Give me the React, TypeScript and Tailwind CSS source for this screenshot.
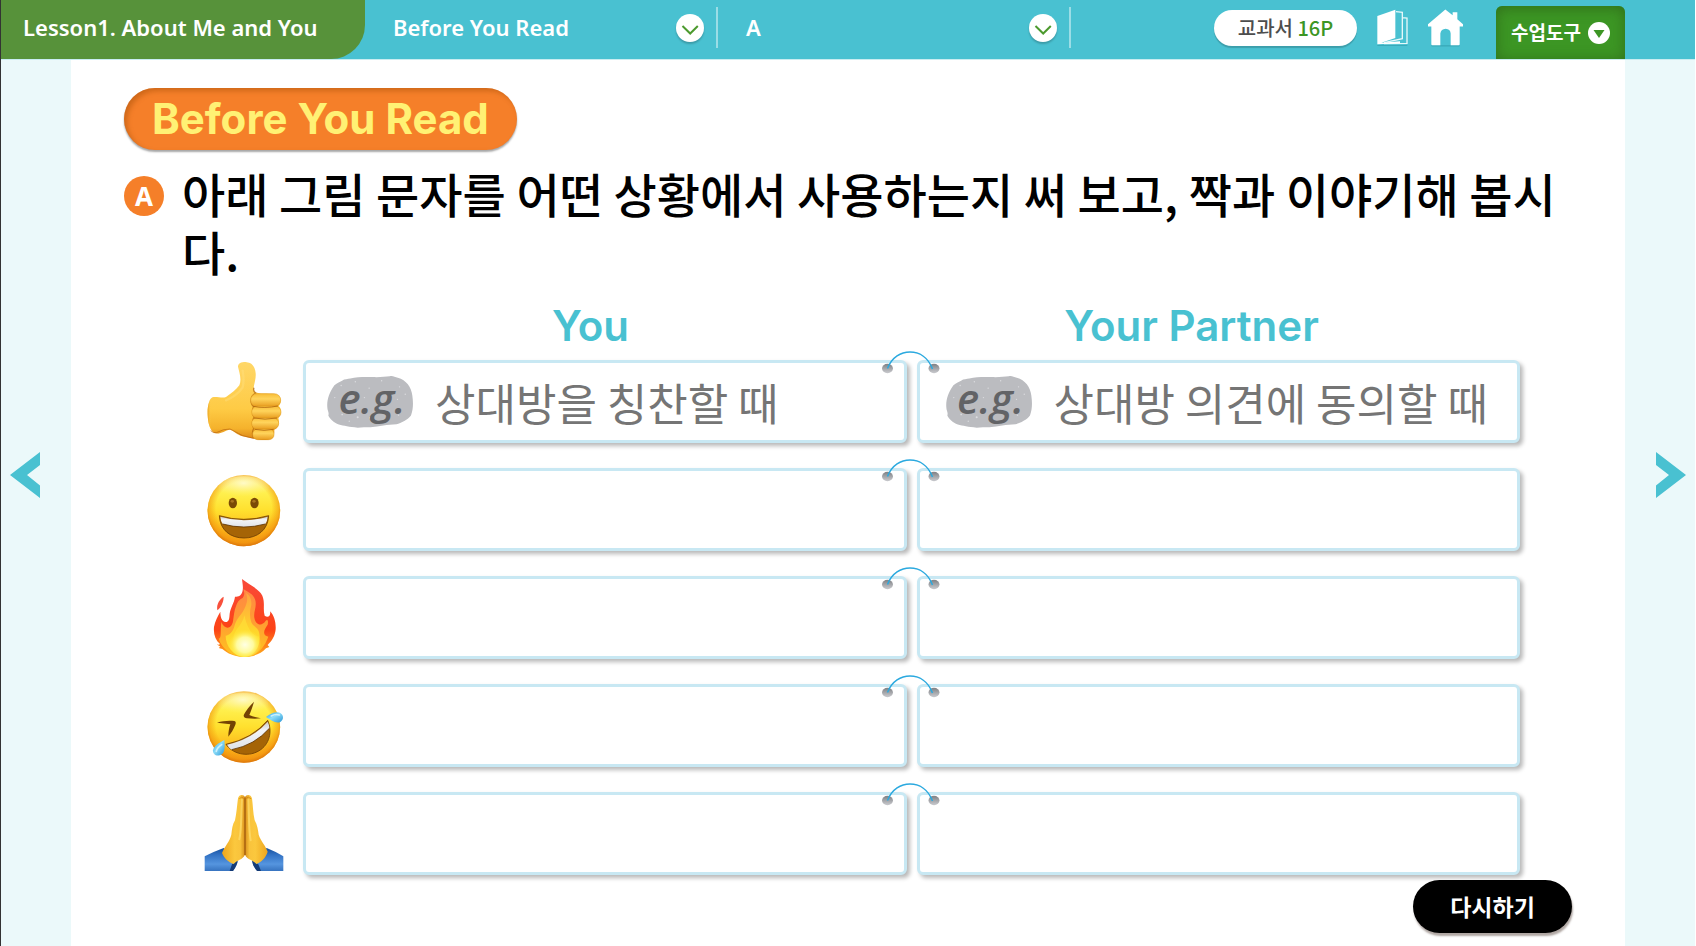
import React from "react";

const KR = "font-['Noto_Sans_CJK_KR','Noto_Sans',sans-serif]";
const LATIN = "font-['Inter','Noto_Sans_CJK_KR',sans-serif]";

function ThumbsUp() {
  return (
    <svg viewBox="42 63 240 240" className="size-20" role="img" aria-label="Thumbs up">
      <defs>
        <linearGradient id="tuSkin" x1="0" y1="0" x2="0" y2="1">
          <stop offset="0" stopColor="#ffd768" />
          <stop offset="0.6" stopColor="#fecb45" />
          <stop offset="0.85" stopColor="#f5b22c" />
          <stop offset="1" stopColor="#d98216" />
        </linearGradient>
        <linearGradient id="tuWrist" x1="0" y1="0" x2="1" y2="0">
          <stop offset="0" stopColor="#e9a01d" />
          <stop offset="0.15" stopColor="#ffcf50" stopOpacity="0" />
        </linearGradient>
        <linearGradient id="tuFinger" x1="0" y1="0" x2="0" y2="1">
          <stop offset="0" stopColor="#f8bd37" />
          <stop offset="0.4" stopColor="#ffd45c" />
          <stop offset="1" stopColor="#e89c1f" />
        </linearGradient>
      </defs>
      <path d="M144 77C144 67 153 63 167 63C187 65 195 77 197 97C199 120 186 139 193 152C204 158 222 157 246 158C267 160 273 169 272 182C271 190 267 194 266 195C276 203 274 222 265 231C269 244 266 258 253 266C254 283 249 295 226 297C202 297 180 290 158 286C141 281 132 270 120 266C104 268 93 280 75 277C58 270 52 240 53 206C55 184 61 168 71 168C84 167 98 172 108 168C125 157 139 145 148 133C156 114 147 91 144 77Z" fill="url(#tuSkin)" />
      <path d="M53 206C55 184 61 168 71 168C84 167 98 172 108 168L120 266C104 268 93 280 75 277C58 270 52 240 53 206Z" fill="url(#tuWrist)" />
      <path d="M62 269Q70 277 79 275Q101 263 120 264Q132 270 158 284L190 292" fill="none" stroke="#b45d0b" strokeWidth="3" opacity="0.6" />
      <path d="M192 140Q188 149 197 156Q183 163 183 179Q184 193 191 196Q184 212 192 229Q183 245 191 262Q184 278 191 292" fill="none" stroke="#b86b10" strokeWidth="4" opacity="0.8" />
      <rect x="182" y="158" width="90" height="39" rx="19" fill="url(#tuFinger)" stroke="#dc9419" strokeWidth="1.5" />
      <rect x="185" y="195" width="88" height="37" rx="18" fill="url(#tuFinger)" stroke="#dc9419" strokeWidth="1.5" />
      <rect x="185" y="230" width="81" height="35" rx="17" fill="url(#tuFinger)" stroke="#dc9419" strokeWidth="1.5" />
      <rect x="188" y="264" width="64" height="32" rx="15" fill="url(#tuFinger)" stroke="#dc9419" strokeWidth="1.5" />
      <path d="M190 196Q222 203 264 195M192 231Q224 238 261 231M194 265Q222 271 251 265" fill="none" stroke="#a95c0b" strokeWidth="3" opacity="0.75" />
      <path d="M108 178Q141 164 158 139Q163 120 158 89" fill="none" stroke="#ffe183" strokeWidth="7" strokeLinecap="round" opacity="0.4" />
    </svg>
  );
}

function FaceDefs({ id }: { id: string }) {
  return (
    <defs>
      <linearGradient id={id + "Base"} x1="0" y1="0" x2="0" y2="1">
        <stop offset="0" stopColor="#fff3a0" />
        <stop offset="0.25" stopColor="#fff04e" />
        <stop offset="0.5" stopColor="#ffe02e" />
        <stop offset="0.8" stopColor="#fdb51b" />
        <stop offset="1" stopColor="#f39a18" />
      </linearGradient>
      <radialGradient id={id + "Edge"} cx="0.5" cy="0.47" r="0.53">
        <stop offset="0.72" stopColor="#f08a00" stopOpacity="0" />
        <stop offset="0.9" stopColor="#ef8b0a" stopOpacity="0.5" />
        <stop offset="1" stopColor="#d9720a" stopOpacity="0.95" />
      </radialGradient>
      <radialGradient id={id + "Shine"} cx="0.5" cy="0.3" r="0.6">
        <stop offset="0" stopColor="#fffbd0" stopOpacity="0.9" />
        <stop offset="1" stopColor="#fff37a" stopOpacity="0" />
      </radialGradient>
      <linearGradient id={id + "Teeth"} x1="0" y1="0" x2="0" y2="1">
        <stop offset="0" stopColor="#c9cbd0" />
        <stop offset="0.3" stopColor="#f3f4f6" />
        <stop offset="1" stopColor="#dfe2e8" />
      </linearGradient>
      <linearGradient id={id + "Tear"} x1="0" y1="0" x2="1" y2="1">
        <stop offset="0" stopColor="#2c9be0" />
        <stop offset="0.45" stopColor="#8cdcf8" />
        <stop offset="1" stopColor="#2a95d6" />
      </linearGradient>
    </defs>
  );
}

function Grinning() {
  return (
    <svg viewBox="42 387 240 240" className="size-20" role="img" aria-label="Grinning face">
      <FaceDefs id="gr" />
      <ellipse cx="161.500" cy="509" rx="109" ry="107" fill="url(#grBase)" />
      <ellipse cx="161.500" cy="509" rx="109" ry="107" fill="url(#grEdge)" />
      <ellipse cx="161" cy="440" rx="76" ry="34" fill="url(#grShine)" />
      <ellipse cx="128.500" cy="486" rx="12.500" ry="15.500" fill="#7a4a06" />
      <ellipse cx="193.500" cy="486" rx="12.500" ry="15.500" fill="#7a4a06" />
      <ellipse cx="127" cy="481" rx="5" ry="4" fill="#a87420" />
      <ellipse cx="192" cy="481" rx="5" ry="4" fill="#a87420" />
      <path d="M88 524Q161 546 236 524C234 568 201 591 162 591C122 591 90 568 88 524Z" fill="#a56406" stroke="#6f3f04" strokeWidth="2.500" />
      <path d="M91 527Q161 548 233 527Q232 540 226 549Q161 567 98 549Q92 540 91 527Z" fill="url(#grTeeth)" />
      <path d="M98 549Q161 567 226 549" fill="none" stroke="#5e3403" strokeWidth="2.500" />
    </svg>
  );
}

function Fire() {
  return (
    <svg viewBox="42 51 240 240" className="size-20" role="img" aria-label="Fire">
      <defs>
        <linearGradient id="fiOuter" x1="0" y1="0" x2="0" y2="1">
          <stop offset="0" stopColor="#f9493a" />
          <stop offset="0.65" stopColor="#fc4316" />
          <stop offset="1" stopColor="#ffb01c" />
        </linearGradient>
        <linearGradient id="fiMid" x1="0" y1="0" x2="0" y2="1">
          <stop offset="0" stopColor="#ff8844" />
          <stop offset="0.5" stopColor="#ff9d32" />
          <stop offset="1" stopColor="#ffc51f" />
        </linearGradient>
        <linearGradient id="fiInner" x1="0" y1="0" x2="0" y2="1">
          <stop offset="0" stopColor="#ffa340" />
          <stop offset="0.6" stopColor="#ffd52a" />
          <stop offset="1" stopColor="#ffe83c" />
        </linearGradient>
        <radialGradient id="fiCore" cx="0.5" cy="0.6" r="0.5">
          <stop offset="0" stopColor="#ffffe4" />
          <stop offset="0.5" stopColor="#fffba0" />
          <stop offset="1" stopColor="#ffec3a" stopOpacity="0" />
        </radialGradient>
      </defs>
      <path d="M101 107C91 112 78 129 82 148C92 140 101 124 101 107Z" fill="#f8503c" />
      <path d="M156 54C178 72 207 83 217 104C226 126 218 144 224 164C236 173 243 161 240 151C253 164 258 184 257 205C255 226 246 239 233 252L238 258L228 262C213 279 188 288 163 288C133 288 112 277 97 264L86 261L91 257L80 250C85 252 88 251 90 249C76 237 70 220 72 198C75 179 84 165 91 152C91 168 95 182 107 183C118 183 118 170 119 158C122 137 132 128 135 107C148 109 156 101 158 88C160 76 157 65 156 54Z" fill="url(#fiOuter)" />
      <path d="M160 84C172 93 190 98 195 115C202 136 190 150 193 170C196 190 214 198 226 181C232 173 236 178 233 191C220 208 217 224 235 227C219 271 190 288 163 288C124 286 96 263 86 233C96 233 90 211 94 183C103 205 124 207 129 181C132 163 132 150 139 133C144 119 150 115 158 111C166 99 162 92 160 84Z" fill="url(#fiMid)" />
      <path d="M168 96C182 104 185 119 184 132C179 149 178 167 184 184C190 198 205 198 208 218C214 253 194 287 163 288C129 284 107 255 107 224C118 224 130 211 134 193C139 172 158 158 166 137C174 118 172 108 168 96Z" fill="url(#fiInner)" />
      <path d="M163 163C158 190 139 200 132 222C125 246 133 279 163 288C198 280 210 254 207 226C200 228 186 220 178 204Q169 190 163 163Z" fill="#ffe53a" opacity="0.55" />
      <ellipse cx="165" cy="242" rx="50" ry="46" fill="url(#fiCore)" />
    </svg>
  );
}

function Rofl() {
  return (
    <svg viewBox="42 375 240 240" className="size-20" role="img" aria-label="Rolling on the floor laughing">
      <FaceDefs id="ro" />
      <ellipse cx="161.500" cy="498" rx="109" ry="107.500" fill="url(#roBase)" />
      <ellipse cx="161.500" cy="498" rx="109" ry="107.500" fill="url(#roEdge)" />
      <ellipse cx="159" cy="430" rx="76" ry="34" fill="url(#roShine)" />
      <path d="M192 422C181 433 166 450 161 463C161 470 165 472 171 472C184 473 198 474 213 472C199 469 187 466 178 462C183 449 188 437 192 422Z" fill="#744304" />
      <path d="M81 485C97 480 116 478 133 480C138 481 138 486 136 491C131 504 123 517 115 527C115 514 117 501 121 490C108 488 95 487 81 485Z" fill="#744304" />
      <path d="M108 550Q185 534 233 478C248 511 239 551 206 570C171 590 127 578 108 550Z" fill="#a56406" stroke="#6f3f04" strokeWidth="2.500" />
      <path d="M111 551Q187 535 233 482Q238 491 238 502Q195 552 125 566Q116 560 111 551Z" fill="url(#roTeeth)" />
      <path d="M125 566Q195 552 238 502" fill="none" stroke="#5e3403" strokeWidth="2.500" />
      <path d="M228 468C243 456 260 450 271 456C282 463 281 476 272 482C259 490 244 478 228 468Z" fill="url(#roTear)" />
      <path d="M103 537C88 545 71 555 69 568C68 580 78 586 89 583C106 578 105 557 103 537Z" fill="url(#roTear)" />
      <path d="M244 465Q256 458 268 462M95 551Q81 560 79 571" fill="none" stroke="#e4f9ff" strokeWidth="5" strokeLinecap="round" opacity="0.75" />
    </svg>
  );
}

function FoldedHands() {
  return (
    <svg viewBox="42 699 240 240" className="size-20" role="img" aria-label="Folded hands">
      <defs>
        <linearGradient id="fhL" x1="0" y1="0" x2="1" y2="0">
          <stop offset="0" stopColor="#eda51e" />
          <stop offset="0.55" stopColor="#fbc83e" />
          <stop offset="0.8" stopColor="#f9c33c" />
          <stop offset="1" stopColor="#d88f1b" />
        </linearGradient>
        <linearGradient id="fhR" x1="1" y1="0" x2="0" y2="0">
          <stop offset="0" stopColor="#eda51e" />
          <stop offset="0.55" stopColor="#fbc83e" />
          <stop offset="0.8" stopColor="#f9c33c" />
          <stop offset="1" stopColor="#d88f1b" />
        </linearGradient>
        <linearGradient id="fhSleeve" x1="0" y1="0" x2="0" y2="1">
          <stop offset="0" stopColor="#164f9c" />
          <stop offset="0.3" stopColor="#3272c4" />
          <stop offset="0.7" stopColor="#5595df" />
          <stop offset="1" stopColor="#3773bf" />
        </linearGradient>
      </defs>
      <path d="M44 886Q73 871 101 861L143 897Q142 913 129 930H44Z" fill="url(#fhSleeve)" />
      <path d="M280 886Q258 872 230 861L186 897Q187 914 202 930H280Z" fill="url(#fhSleeve)" />
      <path d="M126 910L143 896Q144 910 129 930H119ZM205 910L186 896Q186 912 201 930H213Z" fill="#0c2f68" opacity="0.85" />
      <path d="M165 708C161 699 147 699 144 712C141 733 140 757 135 778C127 791 126 805 124 821C119 842 105 854 96 876C102 891 115 903 131 909C141 896 158 897 165 881Z" fill="url(#fhL)" />
      <path d="M165 708C169 699 183 699 186 712C189 733 189 757 194 778C202 792 204 807 206 821C213 842 225 850 233 872C227 891 214 903 199 909C187 895 172 897 165 881Z" fill="url(#fhR)" />
      <path d="M156 716C153 767 155 805 148 835M175 716C177 766 176 805 182 838" fill="none" stroke="#ffe072" strokeWidth="6" strokeLinecap="round" opacity="0.65" />
      <path d="M165 710V882" stroke="#8f4a08" strokeWidth="3" />
      <path d="M148 713Q155 704 163 713M167 713Q175 704 183 713" fill="none" stroke="#ce8618" strokeWidth="2.500" />
    </svg>
  );
}

function Rings() {
  return (
    <svg viewBox="0 0 60 26" className="pointer-events-none absolute -left-10 -top-[15px] h-[26px] w-[60px]" aria-hidden="true">
      <defs>
        <linearGradient id="hole" x1="0" y1="0" x2="0" y2="1">
          <stop offset="0.1" stopColor="#85878b" />
          <stop offset="0.9" stopColor="#c3c4c8" />
        </linearGradient>
      </defs>
      <ellipse cx="7.500" cy="20.500" rx="5.500" ry="4.700" fill="url(#hole)" />
      <ellipse cx="54" cy="20.500" rx="5.500" ry="4.700" fill="url(#hole)" />
      <path d="M7.500 20.500C12 9 21 4 30 4C39 4 48 9 52.500 21" fill="none" stroke="#2ba9df" strokeWidth="1.500" />
    </svg>
  );
}

function ExampleTag() {
  return (
    <span className="relative flex h-[52px] w-[86px] shrink-0 items-center justify-center">
      <svg viewBox="288 236 255 154" className="absolute inset-0 size-full" aria-hidden="true">
        <path d="M289 329C287 309 294 284 310 263C318 257 327 252 334 249C339 244 350 245 357 243C378 238 401 239 423 239C443 240 461 238 474 237C482 234 489 239 498 241C523 248 538 268 541 294C544 315 544 334 537 353C528 366 508 375 494 379C480 381 468 379 455 383C431 389 403 388 379 389C354 387 338 384 323 380C308 374 296 362 292 353C295 344 289 338 289 329Z" fill="#bbbcc0" />
        <g fill="#dcdde0">
          <circle cx="330" cy="264" r="2" /><circle cx="372" cy="253" r="2" /><circle cx="413" cy="272" r="2" />
          <circle cx="450" cy="250" r="2" /><circle cx="503" cy="268" r="2" /><circle cx="520" cy="290" r="2" />
          <circle cx="311" cy="300" r="2" /><circle cx="333" cy="350" r="2.500" /><circle cx="379" cy="358" r="3" />
          <circle cx="415" cy="360" r="2.500" /><circle cx="405" cy="342" r="2" /><circle cx="500" cy="352" r="2" />
          <circle cx="399" cy="300" r="2" /><circle cx="497" cy="305" r="2" /><circle cx="354" cy="370" r="2" />
        </g>
      </svg>
      <span className="relative pb-2 pl-1 font-['Open_Sans',sans-serif] text-[42px] font-semibold italic leading-[44px] text-[#626366]">e.g.</span>
    </span>
  );
}

function AnswerBox({ label, example, partner }: { label: string; example?: string; partner?: boolean }) {
  return (
    <div className={`relative flex h-[83px] min-w-0 items-center gap-[22px] rounded-md border-[3px] border-[#c8e8f3] bg-white pr-2 shadow-[3px_3px_4px_rgba(0,0,0,0.28)] ${partner ? "pl-[26px]" : "pl-[21px]"}`}>
      {example && <ExampleTag />}
      <input
        type="text"
        aria-label={label}
        placeholder={example}
        className={`${KR} h-full min-w-0 flex-1 bg-transparent text-[44px] text-[#757575] outline-none placeholder:text-[#757575] placeholder:opacity-100`}
      />
      {partner && <Rings />}
    </div>
  );
}

const rows = [
  { name: "Thumbs up", Icon: ThumbsUp, you: "상대방을 칭찬할 때", partner: "상대방 의견에 동의할 때" },
  { name: "Grinning face", Icon: Grinning },
  { name: "Fire", Icon: Fire },
  { name: "Laughing", Icon: Rofl },
  { name: "Folded hands", Icon: FoldedHands },
];

function NavMenu({ label }: { label: string }) {
  return (
    <button type="button" className="flex w-[353px] items-center self-stretch pb-1 pl-7 text-left">
      <span className="flex-1">{label}</span>
      <span className="flex size-7 items-center justify-center rounded-full bg-white shadow-[0_2px_2px_rgba(0,0,0,0.2)]">
        <svg viewBox="0 0 28 28" className="size-7" aria-hidden="true">
          <path d="M6.500 12L14.200 19.500L21.800 12" fill="none" stroke="#4c9a2e" strokeWidth="2" />
        </svg>
      </span>
      <span className="ml-3 h-[41px] w-[2px] bg-white/45" />
    </button>
  );
}

function Header() {
  return (
    <header className="flex h-[59px] shrink-0 items-center bg-[#49c1d1] font-['Noto_Sans','Noto_Sans_CJK_KR',sans-serif] text-[22px] font-semibold text-white">
      <div className="flex w-[364px] items-center self-stretch rounded-br-[34px] bg-[#57923a] pb-1 pl-[22px]">Lesson1. About Me and You</div>
      <nav className="flex self-stretch">
        <NavMenu label="Before You Read" />
        <NavMenu label="A" />
      </nav>
      <div className={`${KR} ml-auto flex items-center self-stretch pr-[70px]`}>
        <button type="button" className="mb-1 h-9 w-[143px] rounded-full bg-white text-[20px] font-medium leading-9 text-[#4d4d4d] shadow-[0_2px_1px_rgba(0,0,0,0.18)]">
          교과서 <span className="text-[#3c9624]">16P</span>
        </button>
        <button type="button" aria-label="Textbook" className="mb-1 ml-[19px]">
          <svg viewBox="588 30 99 111" className="h-[37px] w-[33px]" aria-hidden="true">
            <path d="M592 138H682V141H592Z" fill="#2f99a8" opacity="0.6" />
            <path d="M648 38L667 40V119L612 131M667 56L681 57V133L612 134" fill="none" stroke="#e6f8fa" strokeWidth="4" />
            <path d="M592 51L646 32V117L604 131L660 127V133L592 136Z" fill="#fff" />
          </svg>
        </button>
        <button type="button" aria-label="Home" className="mb-1 ml-[18px]">
          <svg viewBox="741 28 111 113" className="h-[38px] w-[37px]" aria-hidden="true">
            <path d="M755 136H838V140H755Z" fill="#2f99a8" opacity="0.6" />
            <path d="M796 29L818 46V37H832V58L849 73V80H839V133Q839 136 836 136H812V101Q811 88 797 87Q783 88 781 101V136H757Q754 136 754 133V80H744V73Z" fill="#fff" />
          </svg>
        </button>
        <button type="button" className="ml-8 flex h-[53px] w-[129px] items-center justify-center gap-[7px] self-end rounded-t-md bg-[#3c9624] text-[19px] font-bold shadow-[inset_0_2px_14px_rgba(40,80,20,0.55)]">
          수업도구
          <svg viewBox="0 0 22 22" className="size-[22px]" aria-hidden="true">
            <circle cx="11" cy="11" r="11" fill="#fff" />
            <path d="M5.500 8H16.500L11 16Z" fill="#3c9624" />
          </svg>
        </button>
      </div>
    </header>
  );
}

function Pager({ next }: { next?: boolean }) {
  return (
    <aside className="flex w-[70px] shrink-0 bg-[#ebf9fa]">
      <button type="button" aria-label={next ? "Next page" : "Previous page"} className={next ? "flex w-full items-center justify-end pb-14 pr-[9px]" : "flex w-full items-center pb-14 pl-[9px]"}>
        <svg viewBox="0 0 30 46" className="h-[46px] w-[30px]" aria-hidden="true">
          <path d={next ? "M0 0L30 23L0 46V33.500L13 23L0 13Z" : "M30 0L0 23L30 46V33.500L17 23L30 13Z"} fill="#49c1d1" />
        </svg>
      </button>
    </aside>
  );
}

export default function App() {
  return (
    <div className="flex min-h-screen flex-col border-l border-[#333] bg-white pr-px">
      <Header />
      <div className="flex flex-1 border-t border-[#c9edf1]">
        <Pager />
        <main className="flex min-w-0 flex-1 flex-col px-[53px] pt-7">
          <h1 className={`${LATIN} h-[62px] self-start rounded-full bg-[#f57f29] px-7 text-[42px] font-bold leading-[62px] text-[#fff174] shadow-[inset_3px_3px_5px_rgba(150,70,0,0.4),0_2px_2px_rgba(0,0,0,0.35)]`}>
            Before You Read
          </h1>
          <div className="mt-[14px] flex items-start gap-[18px]">
            <span className="mt-3 flex size-10 shrink-0 items-center justify-center rounded-full bg-[#f57f29] font-['Noto_Sans',sans-serif] text-[26px] font-bold text-white">A</span>
            <h2 className={`${KR} text-[47px] font-medium leading-[58px] text-black`}>
              아래 그림 문자를 어떤 상황에서 사용하는지 써 보고, 짝과 이야기해 봅시다.
            </h2>
          </div>
          <div className="ml-20 mr-[52px] mt-[17px] grid grid-cols-[80px_1fr_1fr] items-center gap-x-[10px] gap-y-[25px]">
            <div className={`${LATIN} col-span-3 -mb-[19px] grid grid-cols-[86px_1fr_1fr] pr-7 text-center text-[42px] font-semibold leading-[57px] text-[#49c1d1]`}>
              <span />
              <h3>You</h3>
              <h3>Your Partner</h3>
            </div>
            {rows.map(({ name, Icon, you, partner }) => (
              <React.Fragment key={name}>
                <Icon />
                <div className="col-span-2 ml-[9px] grid grid-cols-2 gap-[10px]">
                  <AnswerBox label={`${name} - You`} example={you} />
                  <AnswerBox label={`${name} - Your Partner`} example={partner} partner />
                </div>
              </React.Fragment>
            ))}
          </div>
          <button type="button" className={`${KR} mb-2 mt-[5px] h-[53px] w-[159px] self-end rounded-full bg-black text-[23px] font-bold leading-[51px] text-white shadow-[1px_3px_2px_rgba(80,60,50,0.45)]`}>
            다시하기
          </button>
        </main>
        <Pager next />
      </div>
    </div>
  );
}
